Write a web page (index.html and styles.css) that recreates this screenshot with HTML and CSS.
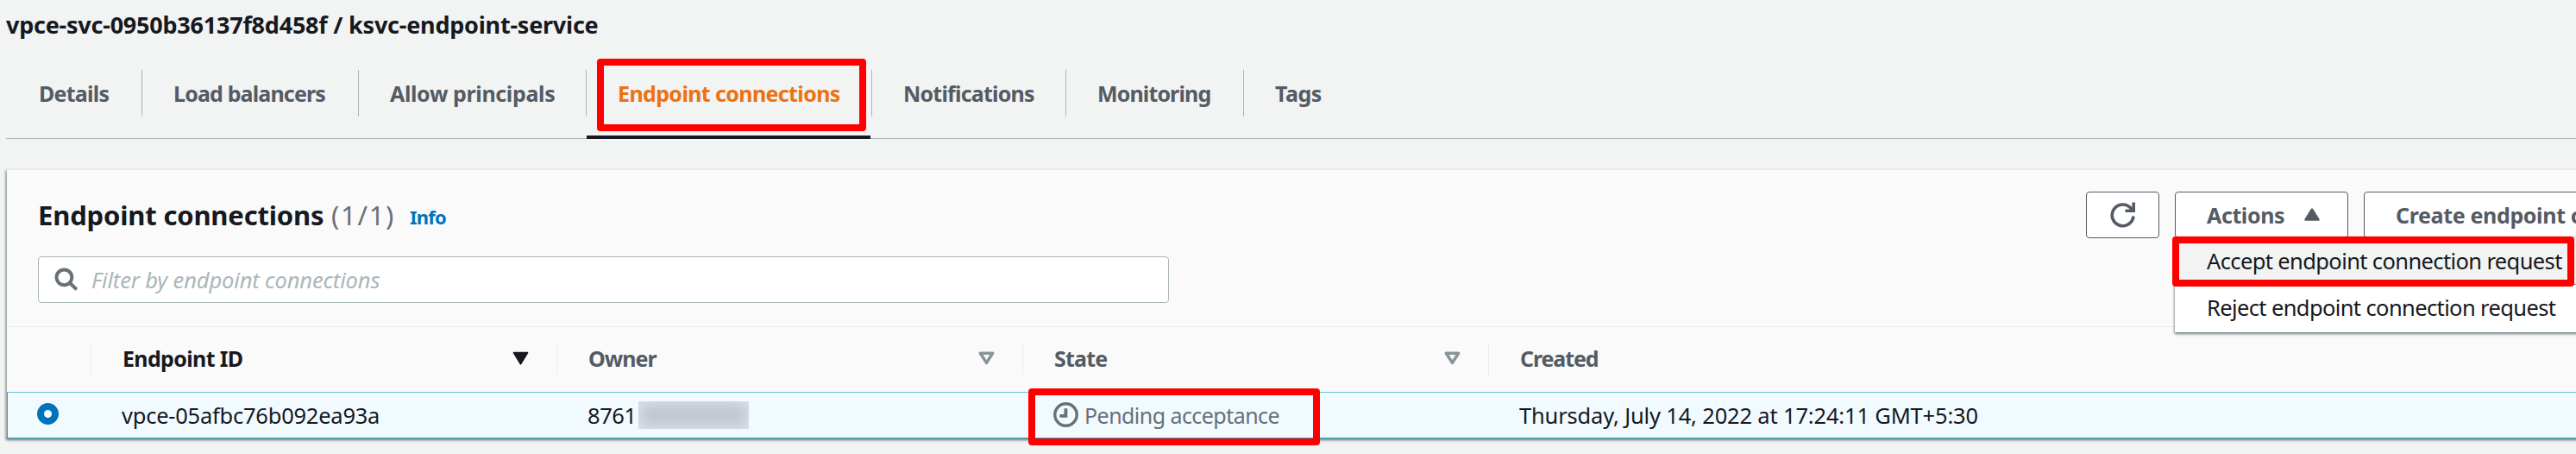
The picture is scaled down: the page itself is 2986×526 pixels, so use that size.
FILE: index.html
```html
<!DOCTYPE html>
<html lang="en">
<head>
<meta charset="utf-8">
<title>Endpoint services</title>
<link rel="stylesheet" href="styles.css">
</head>
<body>
<main class="page">
  <h1 class="title"><span>vpce-svc-0950b36137f8d458f / ksvc-endpoint-service</span></h1>

  <nav class="tabs">
    <a class="tab tab-details">Details</a>
    <a class="tab tab-balancers">Load balancers</a>
    <a class="tab tab-principals">Allow principals</a>
    <a class="tab tab-connections active">Endpoint connections<span class="callout callout-tab"></span></a>
    <a class="tab tab-notifications">Notifications</a>
    <a class="tab tab-monitoring">Monitoring</a>
    <a class="tab tab-tags">Tags</a>
  </nav>

  <section class="panel">
    <header class="panel-head">
      <h2 class="heading">Endpoint connections</h2>
      <span class="count">(1/1)</span>
      <a class="info">Info</a>
      <div class="buttons">
        <button class="btn btn-refresh" aria-label="Refresh">
          <svg width="30" height="32" viewBox="0 0 30 32" fill="none" stroke="#545b64" stroke-width="3.6">
            <path d="M27 17.5A12.4 12.4 0 1 1 24 8.2L27 11"/>
            <path d="M27.2 1.5V11.2H17.6"/>
          </svg>
        </button>
        <div class="dropdown">
          <button class="btn btn-actions"><span>Actions</span>
            <svg width="18" height="15" viewBox="0 0 18 15"><path d="M9 1.5L16.5 13.5H1.5Z" fill="#545b64" stroke="#545b64" stroke-width="2.4" stroke-linejoin="round"/></svg>
          </button>
          <ul class="menu">
            <li class="item item-accept">Accept endpoint connection request<span class="callout callout-menu"></span></li>
            <li class="item item-reject">Reject endpoint connection request</li>
          </ul>
        </div>
        <button class="btn btn-create">Create endpoint connection</button>
      </div>
    </header>

    <div class="filter">
      <svg width="28" height="28" viewBox="0 0 28 28" fill="none" stroke="#687078" stroke-width="4"><circle cx="11.4" cy="11.3" r="8.9"/><path d="M17.6 17.5L25.8 25.4"/></svg>
      <span>Filter by endpoint connections</span>
    </div>

    <div class="grid grid-head">
      <div class="cell select"></div>
      <div class="cell sorted"><span class="h-id">Endpoint ID</span>
        <svg width="19" height="16" viewBox="0 0 19 16"><path d="M1.7 1.7H17.3L9.5 14.5Z" fill="#16191f" stroke="#16191f" stroke-width="2" stroke-linejoin="round"/></svg>
      </div>
      <div class="cell"><span class="h-owner">Owner</span>
        <svg width="19" height="16" viewBox="0 0 19 16"><path d="M2.4 2.2H16.6L9.5 13.4Z" fill="none" stroke="#879596" stroke-width="3.6" stroke-linejoin="round"/></svg>
      </div>
      <div class="cell"><span class="h-state">State</span>
        <svg width="19" height="16" viewBox="0 0 19 16"><path d="M2.4 2.2H16.6L9.5 13.4Z" fill="none" stroke="#879596" stroke-width="3.6" stroke-linejoin="round"/></svg>
      </div>
      <div class="cell last"><span class="h-created">Created</span></div>
    </div>
    <div class="grid grid-row">
      <div class="select-cell"><span class="radio"></span></div>
      <div class="data v-id">vpce-05afbc76b092ea93a</div>
      <div class="data v-owner">8761<span class="mask"></span></div>
      <div class="data v-state">
        <svg width="29" height="29" viewBox="0 0 29 29" fill="none" stroke="#687078"><circle cx="14.5" cy="14.5" r="12.7" stroke-width="3.4"/><path d="M14.4 7.2V15.8H7.4" stroke-width="3.8"/></svg>
        <span>Pending acceptance</span>
        <span class="callout callout-state"></span>
      </div>
      <div class="data v-created">Thursday, July 14, 2022 at 17:24:11 GMT+5:30</div>
    </div>
  </section>
</main>
</body>
</html>
```
FILE: styles.css
```css
* { box-sizing: border-box; }
body {
  margin: 0;
  background: #f2f3f3;
  color: #16191f;
  font-family: "Noto Sans", "Open Sans", sans-serif;
  font-size: 25px;
}
.page { width: 2986px; height: 526px; overflow: hidden; padding-left: 7px; }
.title {
  margin: 0;
  height: 81px;
  font-size: 27px;
  line-height: 58px;
  letter-spacing: -0.23px;
  white-space: nowrap;
}

/* Tabs */
.tabs { display: flex; height: 80px; border-bottom: 1px solid #aab7b8; }
.tab {
  position: relative;
  flex-shrink: 0;
  height: 54px;
  padding-left: 36px;
  border-right: 1px solid #aab7b8;
  color: #545b64;
  font-weight: 700;
  line-height: 54px;
  white-space: nowrap;
}
.tab-details { width: 158px; padding-left: 38px; letter-spacing: -0.75px; }
.tab-balancers { width: 251px; letter-spacing: -0.85px; }
.tab-principals { width: 264px; letter-spacing: -0.36px; }
.tab-connections { width: 331px; letter-spacing: -0.62px; }
.tab-notifications { width: 225px; letter-spacing: -0.8px; }
.tab-monitoring { width: 206px; letter-spacing: -0.88px; }
.tab-tags { border: 0; letter-spacing: -0.5px; }
.active { color: #ec7211; }
.active::after {
  content: "";
  position: absolute;
  left: 0;
  top: 76px;
  width: 329px;
  height: 4px;
  background: #16191f;
}

/* Highlight frames */
.callout { position: absolute; border: 8px solid #f00; border-radius: 4px; z-index: 5; }
.callout-tab { left: 12px; top: -13px; width: 312px; height: 84px; }
.callout-state { left: 5px; top: -5px; width: 338px; height: 66px; }
.callout-menu { left: -3px; top: -1px; width: 466px; height: 58px; }

/* Panel */
.panel {
  margin: 36px 0 0 1px;
  width: 2990px;
  height: 311px;
  background: #fafafa;
  box-shadow: 0 -1px 1px #e4e8e8, -1px 1px 2px 1px rgba(0, 28, 36, .28), 0 2px 3px rgba(0, 28, 36, .35);
}
.panel-head { display: flex; align-items: center; height: 100px; padding: 3px 0 0 36px; }
.panel-head > * { flex-shrink: 0; }
.heading { margin: 0; width: 340px; font-size: 31px; letter-spacing: -0.18px; white-space: nowrap; }
.count { width: 91px; font-size: 31px; color: #687078; letter-spacing: 1.7px; }
.info { width: 42px; color: #0073bb; font-size: 22px; font-weight: 700; letter-spacing: -0.8px; padding-top: 5px; }
.buttons { display: flex; gap: 18px; margin-left: 1901px; }
.btn {
  flex-shrink: 0;
  height: 54px;
  padding: 0 0 0 36px;
  border: 1px solid #545b64;
  border-radius: 4px;
  background: #fff;
  color: #545b64;
  font: 700 25px "Noto Sans", "Open Sans", sans-serif;
  white-space: nowrap;
  text-align: left;
}
.btn-refresh { display: flex; align-items: center; justify-content: center; width: 85px; padding: 0; }
.btn-actions { display: flex; align-items: center; width: 201px; letter-spacing: -0.4px; }
.btn-actions span { width: 113px; }
.btn-create { width: 380px; padding-left: 36px; letter-spacing: -0.35px; }

.dropdown { position: relative; }
.menu {
  position: absolute;
  left: 0;
  top: 53px;
  z-index: 3;
  width: 480px;
  margin: 0;
  padding: 0;
  list-style: none;
  background: #fff;
  box-shadow: 0 2px 3px rgba(0, 28, 36, .5), 0 0 2px 1px rgba(0, 28, 36, .2);
}
.item {
  position: relative;
  height: 55px;
  padding-left: 37px;
  font-size: 25.5px;
  line-height: 53px;
  letter-spacing: -0.62px;
  white-space: nowrap;
}
.item-accept { line-height: 55px; background: #f2f3f3; border-bottom: 1px solid #879596; }

.filter {
  display: flex;
  align-items: center;
  width: 1311px;
  height: 54px;
  margin-left: 36px;
  padding-left: 18px;
  border: 1px solid #aab7b8;
  border-radius: 4px;
  background: #fff;
}
.filter span {
  margin-left: 15px;
  color: #aab7b8;
  font-size: 25.5px;
  font-style: italic;
  letter-spacing: -0.15px;
}

/* Table */
.grid { display: grid; grid-template-columns: 98px 540px 540px 540px 1fr; }
.grid-head { height: 76px; margin-top: 27px; border-top: 1px solid #eaeded; padding-top: 18px; }
.cell {
  display: flex;
  align-items: center;
  justify-content: space-between;
  height: 37px;
  padding: 0 32px 1px 36px;
  border-right: 1px solid #eaeded;
  color: #545b64;
  font-weight: 700;
}
.cell.last { border: 0; }
.sorted { color: #16191f; }
.h-id { letter-spacing: -0.65px; }
.h-owner { letter-spacing: -0.95px; }
.h-state { letter-spacing: -0.8px; }
.h-created { letter-spacing: -1.1px; }
.grid-row {
  height: 54px;
  border: 1px solid #1fa6c4;
  border-top-color: #6cc5d9;
  border-right: 0;
  background: #f1faff;
  line-height: 52px;
}
.select-cell { display: flex; align-items: center; padding: 0 0 4px 34px; }
.radio { width: 25px; height: 25px; border: 8px solid #0073bb; border-radius: 50%; background: #fff; }
.data { position: relative; display: flex; align-items: center; padding-left: 34px; height: 51px; white-space: nowrap; }
.v-id { font-size: 25.5px; letter-spacing: -0.24px; }
.v-owner { font-size: 25.5px; letter-spacing: -0.4px; }
.mask {
  width: 128px;
  height: 32px;
  margin-left: 2px;
  background: #c1c7cf;
  box-shadow: inset 0 0 16px 2px #dde4ec;
}
.v-state { color: #687078; letter-spacing: -0.55px; }
.v-state svg { margin: 0 7px 1px 0; }
.v-created { font-size: 25.5px; letter-spacing: -0.17px; }
```
